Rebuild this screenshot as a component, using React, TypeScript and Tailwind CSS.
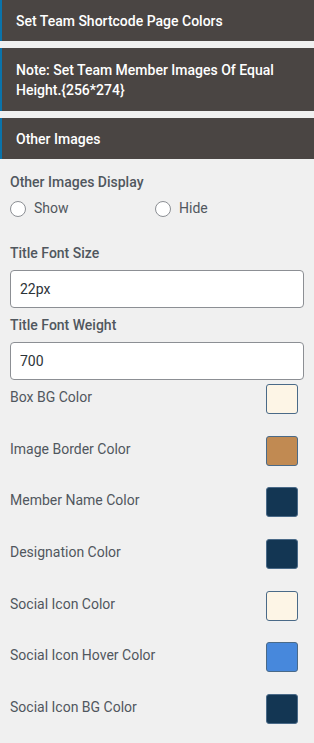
import { useState } from "react";

const colorRows = [
  { label: "Box BG Color", color: "#fdf5e6" },
  { label: "Image Border Color", color: "#c18a52" },
  { label: "Member Name Color", color: "#133653" },
  { label: "Designation Color", color: "#133653" },
  { label: "Social Icon Color", color: "#fdf5e6" },
  { label: "Social Icon Hover Color", color: "#4788dc" },
  { label: "Social Icon BG Color", color: "#133653" },
];

function Header({ children, tall }: { children: React.ReactNode; tall?: boolean }) {
  return (
    <div
      className={`border-l-2 border-[#0a73ab] bg-[#4a4543] pl-[14px] pr-3 text-[14px] font-medium leading-[20px] text-white ${
        tall ? "py-[11.5px]" : "py-[10.5px]"
      }`}
    >
      {children}
    </div>
  );
}

export default function App() {
  const [display, setDisplay] = useState("");

  return (
    <div className="min-h-[743px] w-[314px] bg-[#f0f0f0] font-['Roboto',sans-serif] text-[#50575e]">
      <Header>Set Team Shortcode Page Colors</Header>
      <div className="h-[7px]" />
      <Header tall>Note: Set Team Member Images Of Equal Height.{"{256*274}"}</Header>
      <div className="h-[7px]" />
      <Header>Other Images</Header>

      <div className="px-[10px] pt-[13px]">
        <p className="text-[14px] font-medium leading-[20px]">Other Images Display</p>
        <div className="mt-[6px] flex items-center text-[14px]">
          <label className="flex w-[145px] items-center gap-2">
            <input
              type="radio"
              name="other"
              checked={display === "show"}
              onChange={() => setDisplay("show")}
              className="h-4 w-4 appearance-none rounded-full border border-[#8c8f94] bg-white"
            />
            Show
          </label>
          <label className="flex items-center gap-2">
            <input
              type="radio"
              name="other"
              checked={display === "hide"}
              onChange={() => setDisplay("hide")}
              className="h-4 w-4 appearance-none rounded-full border border-[#8c8f94] bg-white"
            />
            Hide
          </label>
        </div>

        <p className="mt-[24px] text-[14px] font-medium leading-[20px]">Title Font Size</p>
        <input
          defaultValue="22px"
          className="mt-[7px] h-[38px] w-[294px] rounded-[4px] border border-[#8c8f94] bg-white px-[9px] text-[14px] text-[#2c3338] outline-none"
        />
        <p className="mt-[7px] text-[14px] font-medium leading-[20px]">Title Font Weight</p>
        <input
          defaultValue="700"
          className="mt-[7px] h-[38px] w-[294px] rounded-[4px] border border-[#8c8f94] bg-white px-[9px] text-[14px] text-[#2c3338] outline-none"
        />

        <div className="mt-[4px] flex flex-col gap-[21.7px]">
          {colorRows.map((r) => (
            <div key={r.label} className="flex items-center justify-between pr-[6px]">
              <span className="-mt-[4px] text-[14px] leading-[20px]">{r.label}</span>
              <span
                className="block h-[30px] w-[32px] rounded-[3px] border border-[#4a6a88]"
                style={{ backgroundColor: r.color }}
              />
            </div>
          ))}
        </div>
      </div>
    </div>
  );
}
